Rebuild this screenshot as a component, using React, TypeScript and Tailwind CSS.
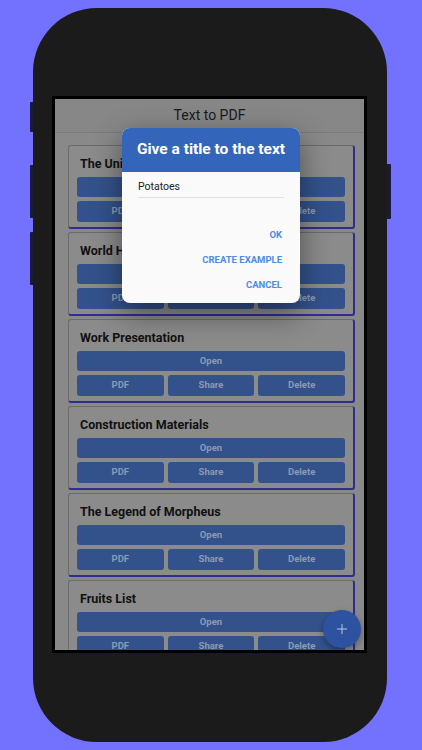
import { Plus } from "lucide-react";

const docs = [
  "The Universe",
  "World History",
  "Work Presentation",
  "Construction Materials",
  "The Legend of Morpheus",
  "Fruits List",
];

function DocCard({ title }: { title: string }) {
  return (
    <div className="ml-[13px] w-[287px] h-[84px] shrink-0 rounded-[3px] border-l border-t border-r-2 border-b-2 border-l-[#6c6c6c] border-t-[#6c6c6c] border-r-[#2e2e90] border-b-[#2e2e90] bg-[#8b8b8b] px-[8px] pt-[10px] pb-[5px]">
      <div className="h-[16px] pl-[3px] text-[12.5px] font-bold leading-[16px] text-[#111]">
        {title}
      </div>
      <button className="mt-[5px] flex h-[20px] w-full items-center justify-center rounded-[3px] bg-[#33528c] text-[9.5px] font-bold text-[#8a9ab5]">
        Open
      </button>
      <div className="mt-[4px] grid grid-cols-3 gap-[4px]">
        {["PDF", "Share", "Delete"].map((b) => (
          <button
            key={b}
            className="flex h-[21px] items-center justify-center rounded-[3px] bg-[#33528c] text-[9.5px] font-bold text-[#8a9ab5]"
          >
            {b}
          </button>
        ))}
      </div>
    </div>
  );
}

export default function App() {
  return (
    <div
      className="flex h-[750px] w-[422px] justify-start bg-[#7272fe] pl-[33px] pt-[8px]"
      style={{ fontFamily: "Roboto, 'Noto Sans', sans-serif" }}
    >
      <div className="relative h-[734px] w-[354px] rounded-[64px] bg-[#1b1b1b] pl-[19px] pt-[88px]">
        {/* side buttons */}
        <div className="absolute left-[-3px] top-[94px] h-[30px] w-[3px] rounded-l-[1px] bg-[#1a1a3c]" />
        <div className="absolute left-[-3px] top-[157px] h-[53px] w-[3px] rounded-l-[1px] bg-[#1a1a3c]" />
        <div className="absolute left-[-3px] top-[224px] h-[53px] w-[3px] rounded-l-[1px] bg-[#1a1a3c]" />
        <div className="absolute right-[-4px] top-[156px] h-[55px] w-[4px] rounded-r-[1px] bg-[#1a1a3c]" />

        {/* screen */}
        <div className="relative h-[557px] w-[315px] overflow-hidden border-[3px] border-black bg-[#898989]">
          <div className="flex h-[34px] items-center justify-center border-b border-[#7b7b7b] bg-[#878787] text-[14px] text-[#1a1a1a]">
            Text to PDF
          </div>
          <div className="flex flex-col gap-[3px] pt-[12px]">
            {docs.map((d) => (
              <DocCard key={d} title={d} />
            ))}
          </div>

          {/* FAB */}
          <div className="absolute left-[268px] top-[511px] flex h-[38px] w-[38px] items-center justify-center rounded-full bg-[#2d53a0] shadow-[0_3px_6px_rgba(0,0,0,0.35)]">
            <Plus className="h-[16px] w-[16px] text-[#b9c6e0]" strokeWidth={1.5} />
          </div>

          {/* dialog */}
          <div className="absolute left-[67px] top-[29px] w-[178px] overflow-hidden rounded-[8px] bg-[#fafafa] shadow-[0_10px_30px_rgba(0,0,0,0.45)]">
            <div className="flex h-[44px] items-center justify-center bg-[#3366bb] text-[15.5px] font-bold text-white">
              Give a title to the text
            </div>
            <div className="px-[16px] pb-[12px]">
              <div className="border-b border-[#e2e2e2] pb-[3px] pt-[8px] text-[10.5px] leading-[14px] text-[#222]">
                Potatoes
              </div>
              <div className="mt-[31px] flex flex-col items-end gap-[13px] pr-[2px] text-[9.5px] font-bold leading-[12px] text-[#4c8be6]">
                <span>OK</span>
                <span>CREATE EXAMPLE</span>
                <span>CANCEL</span>
              </div>
            </div>
          </div>
        </div>
      </div>
    </div>
  );
}
